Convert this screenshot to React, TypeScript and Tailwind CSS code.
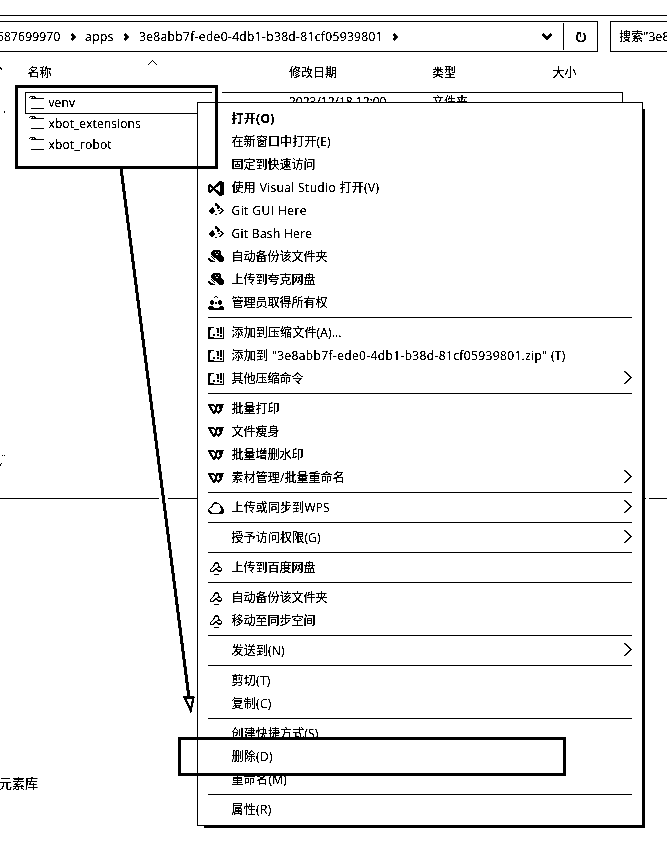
import type { ReactNode } from "react";

type IconName = "vs" | "git" | "quark" | "admin" | "zip" | "wps" | "cloud" | "baidu";

interface Item {
  label: string;
  icon?: IconName;
  bold?: boolean;
  sub?: boolean;
  cls?: string;
}

const groups: Item[][] = [
  [
    { label: "打开(O)", bold: true, cls: "tracking-[0.3px]" },
    { label: "在新窗口中打开(E)", cls: "tracking-[0.15px]" },
    { label: "固定到快速访问" },
    { label: "使用 Visual Studio 打开(V)", icon: "vs", cls: "tracking-[0.34px]" },
    { label: "Git GUI Here", icon: "git", cls: "tracking-[0.42px]" },
    { label: "Git Bash Here", icon: "git", cls: "tracking-[0.3px]" },
    { label: "自动备份该文件夹", icon: "quark" },
    { label: "上传到夸克网盘", icon: "quark" },
    { label: "管理员取得所有权", icon: "admin" },
  ],
  [
    { label: "添加到压缩文件(A)...", icon: "zip", cls: "tracking-[0.15px]" },
    { label: '添加到 "3e8abb7f-ede0-4db1-b38d-81cf05939801.zip" (T)', icon: "zip", cls: "tracking-[0.37px]" },
    { label: "其他压缩命令", icon: "zip", sub: true },
  ],
  [
    { label: "批量打印", icon: "wps" },
    { label: "文件瘦身", icon: "wps" },
    { label: "批量增删水印", icon: "wps" },
    { label: "素材管理/批量重命名", icon: "wps", sub: true, cls: "tracking-[0.1px]" },
  ],
  [{ label: "上传或同步到WPS", icon: "cloud", sub: true, cls: "tracking-[0.15px]" }],
  [{ label: "授予访问权限(G)", sub: true, cls: "tracking-[0.15px]" }],
  [{ label: "上传到百度网盘", icon: "baidu" }],
  [
    { label: "自动备份该文件夹", icon: "baidu" },
    { label: "移动至同步空间", icon: "baidu" },
  ],
  [{ label: "发送到(N)", sub: true, cls: "tracking-[0.2px]" }],
  [
    { label: "剪切(T)", cls: "tracking-[0.3px]" },
    { label: "复制(C)", cls: "tracking-[0.3px]" },
  ],
  [
    { label: "创建快捷方式(S)", cls: "tracking-[0.15px]" },
    { label: "删除(D)", cls: "tracking-[0.3px]" },
    { label: "重命名(M)", cls: "tracking-[0.3px]" },
  ],
  [{ label: "属性(R)", cls: "tracking-[0.3px]" }],
];

const glyphs: Record<IconName, ReactNode> = {
  vs: (
    <path fillRule="evenodd" d="M11 1l5 1v13l-5 1-6-6-2.500 3L0 12V5l2.500-1L5 7zM1.500 6v5L4 8.500zM11.500 5L7 8.500l4.500 3.500z" />
  ),
  git: (
    <>
      <path d="M0 8l4-4 2 1v2l1 1-1 2-2 1z" />
      <path d="M7 0h2l1 2 2 1v2h-2L8 3H7zM9 4l2 2H9z" />
      <path d="M13 4l3 3.500-4 4-1-1 3-3-2-2zM10 7h2v1h-2zM7 11h2v1H7z" />
    </>
  ),
  quark: (
    <>
      <path fillRule="evenodd" d="M5 1h6l2 2v3l3 3v3l-2 1h-3L7 9 4 7 3 5V3zM7 3v1h1V3zM10 3v1h1V3zM8 5v1h2V5z" />
      <path d="M1 8l2 3 4 1v1H2l-2-2zM3 7l4 4H6L3 8z" />
    </>
  ),
  admin: (
    <>
      <path d="M7 1h2v1H7zM6 2h1v1H6zM9 2h1v1H9zM1 11h3l2 2h4l2-2h3l1 2v2H1l-1-1v-1z" />
      <circle cx="4" cy="7.500" r="2.200" />
      <circle cx="12" cy="7.500" r="2.200" />
      <path d="M7 7h2v2H7z" />
    </>
  ),
  zip: (
    <>
      <path d="M0 2h6v1H3v2H2v7h4v1h9V2h1v12H0z" />
      <path d="M5 9h2v2H5zM8 3h2v1H8zM9 3h2v5H9zM12 2h2v7h-2zM9 9h2v2H9zM12 10h2v2h-2z" />
    </>
  ),
  wps: (
    <path fillRule="evenodd" d="M0 3h6l1 2 2-2h7l-2 6-3 4h-1L9 10l-3 3H5L1 6zM3 5l3 6 1-4-2-2zM10 5L8.500 8l1.500 3 3-6zM7 3h2l-1 1zM11 5h2l-2 5z" />
  ),
  cloud: (
    <path fillRule="evenodd" d="M5 3q4-2 7 1l1 2q4 3 3 7l-2 1H3q-4-2-3-5l4-3zM6 4L5 7 2 8 1 10l3 3h6l3-3-1-5-2-1z" />
  ),
  baidu: (
    <g fill="none" stroke="currentColor" strokeWidth="1.200">
      <path d="M6 5l1-2h3l1 2-1 2L5 11.500H3l-.5-2L6 6zM8 8l2 3h3l1-2-2-2h-2M6 14.500h5" />
    </g>
  ),
};

function Glyph({ name }: { name: IconName }) {
  return (
    <svg className="h-4 w-4" viewBox="0 0 16 16" fill="currentColor" shapeRendering="crispEdges">
      {glyphs[name]}
    </svg>
  );
}

function Row({ item }: { item: Item }) {
  return (
    <li className="flex h-[23px] items-center">
      <span className="w-[23.5px] shrink-0">{item.icon && <Glyph name={item.icon} />}</span>
      <span className={`flex-1 whitespace-pre ${item.bold ? "font-bold" : ""} ${item.cls ?? ""}`}>{item.label}</span>
      {item.sub && (
        <svg className="mb-0.5 h-[13px] w-2" viewBox="0 0 8 13" fill="none" stroke="currentColor" strokeWidth="1.100">
          <path d="M.5.500l6.500 6-6.500 6" />
        </svg>
      )}
    </li>
  );
}

function Crumb() {
  return (
    <svg className="h-2 w-[5px] shrink-0" viewBox="0 0 5 8" fill="none" stroke="currentColor" strokeWidth="2">
      <path d="M.5 1l3 3-3 3" />
    </svg>
  );
}

function Folder() {
  return (
    <svg className="h-[15px] w-4 shrink-0" viewBox="0 0 16 15" fill="currentColor" shapeRendering="crispEdges">
      <path d="M1 0h5v1H1zM0 1h1v1H0zM2 2h5v1H2zM3 1h1v1H3zM5 1h2v1H5zM7 2h8v1H7zM2 12h13v1H2z" />
    </svg>
  );
}

export default function App() {
  return (
    <div className="relative h-[842px] w-[667px] overflow-hidden bg-white font-['Open_Sans','Noto_Sans_CJK_SC',sans-serif] text-xs leading-none text-black brightness-[0.8] contrast-[12] grayscale">
      <div className="h-4 border-b border-black" />
      <div className="mt-[5px] flex h-[31px] gap-3">
        <div className="flex w-[598px] shrink-0 items-center border-y border-r border-black">
          <span className="-ml-[6px] w-[66.500px] shrink-0 text-right tracking-[0.2px] whitespace-nowrap">687699970</span>
          <span className="ml-[10px] flex"><Crumb /></span>
          <span className="ml-[9.500px] w-[29px] tracking-[0.5px]">apps</span>
          <span className="ml-[10px] flex"><Crumb /></span>
          <span className="ml-[10px] w-[244px] tracking-[0.36px] whitespace-nowrap">3e8abb7f-ede0-4db1-b38d-81cf05939801</span>
          <span className="ml-[10px] flex"><Crumb /></span>
          <svg className="ml-auto h-[7px] w-[10px]" viewBox="0 0 10 7" fill="none" stroke="currentColor" strokeWidth="2">
            <path d="M.5 1L5 5.500 9.500 1" />
          </svg>
          <div className="ml-[11px] flex h-[27px] w-[34px] items-center border-l border-black pl-[11px]">
            <svg className="h-3 w-3" viewBox="0 0 12 12" fill="none" stroke="currentColor" strokeWidth="1.500">
              <path d="M8.500 2.500a4.400 4.400 0 1 1-5 0M2 1.500h3.500v4" />
            </svg>
          </div>
        </div>
        <div className="flex flex-1 items-center overflow-hidden border-y border-l border-black pl-2 tracking-[0.2px] whitespace-nowrap">
          搜索"3e8abb7f
        </div>
      </div>

      <div className="flex h-10 items-center pl-[27.500px] pt-0.5">
        <span className="w-[120.500px]">名称</span>
        <svg className="mb-[22px] h-[5px] w-[9px]" viewBox="0 0 9 5" fill="none" stroke="currentColor">
          <path d="M.5 4.500l4-4 4 4" />
        </svg>
        <span className="ml-[132px] w-[143px]">修改日期</span>
        <span className="w-[120.500px]">类型</span>
        <span>大小</span>
      </div>

      <div className="ml-[25px] w-[598px]">
        <div className="flex h-[22px] items-center border border-black pl-[3px]">
          <Folder />
          <span className="ml-[3.500px] w-[240.500px] tracking-[0.1px]">venv</span>
          <span className="mb-0.5 w-[143px]">2023/12/18 12:00</span>
          <span className="mb-0.5">文件夹</span>
        </div>
        <div className="-mt-px flex h-[21px] items-center pl-1">
          <Folder />
          <span className="ml-[3.500px] tracking-[0.1px]">xbot_extensions</span>
        </div>
        <div className="flex h-[21px] items-center pl-1">
          <Folder />
          <span className="ml-[3.500px] tracking-[0.2px]">xbot_robot</span>
        </div>
      </div>
      <div className="mt-[343px] border-t border-black" />
      <div className="mt-[278px] -ml-px text-[13px]">元素库</div>

      <svg className="absolute left-0 top-0 h-[480px] w-[30px]" viewBox="0 0 30 480" shapeRendering="crispEdges">
        <path d="M0 67h1v1h1v2H1v-1H0zM4 111h1v2H4zM2 455h1v1H2zM4 455h1v1H4zM1 463h1v1H1zM0 464h1v2H0z" />
      </svg>

      <div className="absolute left-[212px] top-[91px] h-[3px] w-[10px] bg-white" />
      <div className="absolute left-[159px] top-[498px] h-px w-[9px] bg-white" />
      <div className="absolute left-[646px] top-[498px] h-px w-[3px] bg-white" />

      <div className="absolute left-[204px] top-[109px] h-[719px] w-[441px] bg-black" />
      <div className="absolute left-[197px] top-[102px] h-[724px] w-[446px] border border-black bg-white px-[10px] py-1">
        {groups.map((items, i) => (
          <ul key={i}>
            {i > 0 && <li className="my-[3px] h-px bg-black" />}
            {items.map((item, j) => (
              <Row key={j} item={item} />
            ))}
          </ul>
        ))}
      </div>

      <div className="absolute left-[15px] top-[85px] h-[84px] w-[203px] border-3 border-black" />
      <div className="absolute left-[178px] top-[737px] h-[39px] w-[388px] border-3 border-black" />
      <svg className="absolute left-[110px] top-[160px] h-[560px] w-[90px]" viewBox="110 160 90 560">
        <path d="M121 168L189 698" stroke="black" strokeWidth="2.800" />
        <path d="M184.500 697.500h9l-2.800 13z" fill="white" stroke="black" strokeWidth="2" />
      </svg>
    </div>
  );
}
